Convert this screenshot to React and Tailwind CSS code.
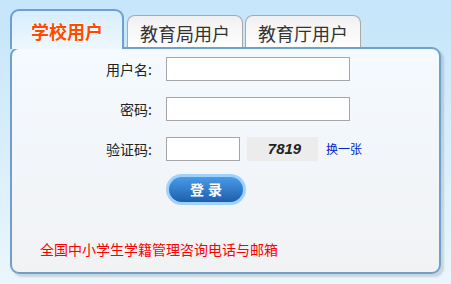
export default function App() {
  const font = { fontFamily: '"Noto Sans CJK SC", "Liberation Sans", sans-serif' };
  return (
    <div
      className="w-[451px] h-[284px] overflow-hidden bg-gradient-to-b from-[#c5e5fa] to-[#eaf6fc] pl-[10px] pt-[9px]"
      style={font}
    >
      {/* tabs */}
      <div className="relative z-10 flex items-end -mb-[2px] h-[40px]">
        <div className="w-[114px] h-[40px] rounded-t-[9px] border-2 border-b-0 border-[#6fa0cc] bg-gradient-to-b from-[#d6edfc] to-[#eef8fe] flex items-center justify-center pt-[2px]">
          <span className="text-[18px] font-bold text-[#ff4a00] leading-none [text-shadow:0_0_2px_#fff,0_0_2px_#fff,0_0_2px_#fff]">学校用户</span>
        </div>
        <div className="ml-[3px] mb-[2px] w-[116px] h-[32px] rounded-t-[8px] border border-b-0 border-[#a9a9a9] bg-gradient-to-b from-[#f0f0f0] to-white flex items-center justify-center pt-[2px]">
          <span className="text-[18px] text-[#333] leading-none">教育局用户</span>
        </div>
        <div className="ml-[2px] mb-[2px] w-[116px] h-[32px] rounded-t-[8px] border border-b-0 border-[#a9a9a9] bg-gradient-to-b from-[#f0f0f0] to-white flex items-center justify-center pt-[2px]">
          <span className="text-[18px] text-[#333] leading-none">教育厅用户</span>
        </div>
      </div>

      {/* panel */}
      <div className="w-[431px] h-[227px] rounded-[9px] border-2 border-[#6fa0cc] bg-gradient-to-b from-[#f4faff] to-[#f1f2f4] shadow-[3px_3px_2px_rgba(0,0,0,0.13)] pt-[8px]">
        <div className="grid grid-cols-[140px_1fr] items-center gap-x-[14px] gap-y-[16px] text-[14px] text-[#222]">
          <label className="text-right">用户名:</label>
          <input className="w-[184px] h-[24px] border border-[#a6a6a6] bg-white" />

          <label className="text-right">密码:</label>
          <input type="password" className="w-[184px] h-[24px] border border-[#a6a6a6] bg-white" />

          <label className="text-right">验证码:</label>
          <div className="flex items-center">
            <input className="w-[74px] h-[24px] border border-[#a6a6a6] bg-white" />
            <div className="ml-[7px] w-[71px] h-[24px] bg-[#ececec] flex items-center justify-center">
              <span
                className="text-[15px] font-bold italic text-[#222] pl-[4px]"
                style={{ fontFamily: '"Liberation Sans", sans-serif' }}
              >
                7819
              </span>
            </div>
            <a className="ml-[8px] text-[12px] text-[#0022cc]">换一张</a>
          </div>

          <div />
          <div className="-mt-[3px]">
            <button className="w-[80px] h-[31px] rounded-full bg-[#9fd2fb] p-[3px]">
              <span className="flex w-full h-full items-center justify-center rounded-full bg-gradient-to-b from-[#4a9be8] to-[#1d5fae] text-white text-[14px] font-bold tracking-[4px] pl-[4px]">
                登录
              </span>
            </button>
          </div>
        </div>

        <p className="mt-[34px] pl-[28px] text-[14px] text-[#ff0000]">全国中小学生学籍管理咨询电话与邮箱</p>
      </div>
    </div>
  );
}
